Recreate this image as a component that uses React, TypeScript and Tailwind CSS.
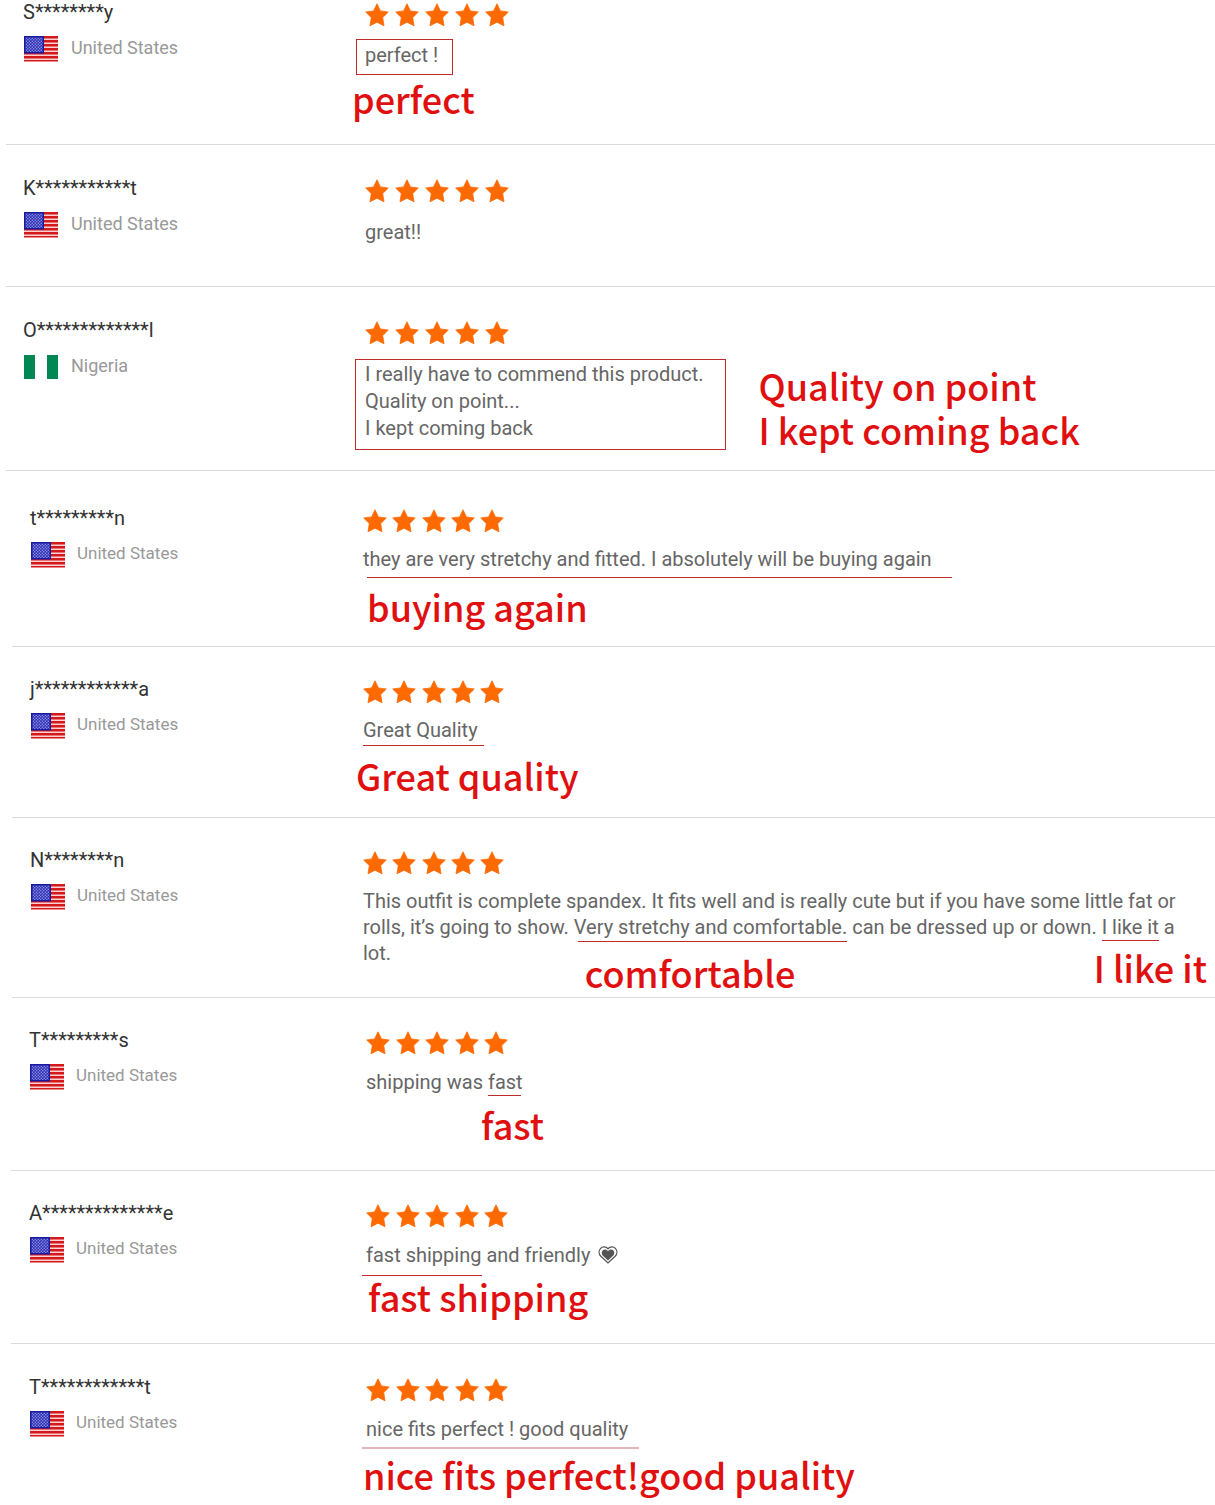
import { useId, type ReactNode } from "react";
import { clsx } from "clsx";

type Country = "United States" | "Nigeria";

interface Theme {
  inset: string;
  author: string;
  country: string;
  stars: string;
  comment: string;
}

const themes: Record<"wide" | "compact" | "regular", Theme> = {
  wide: {
    inset: "ml-[6px]",
    author: "pl-[18px] w-[359px]",
    country: "pl-px text-lg leading-6",
    stars: "w-36",
    comment: "leading-[27px]",
  },
  compact: {
    inset: "ml-3",
    author: "pl-[19px] w-[351px]",
    country: "text-[17px] leading-[22px]",
    stars: "w-[141px]",
    comment: "leading-[26px]",
  },
  regular: {
    inset: "ml-[11px]",
    author: "pl-[19px] w-[355px]",
    country: "text-[17px] leading-[22px]",
    stars: "w-[142px]",
    comment: "leading-[26px]",
  },
};

function UsFlag() {
  const id = useId();
  return (
    <svg viewBox="0 0 34 26" className="h-[26px] w-[34px] shrink-0" aria-hidden="true">
      <defs>
        <pattern id={id} width="3" height="3" patternUnits="userSpaceOnUse">
          <rect width="3" height="3" fill="#2f31b4" />
          <circle cx="0.8" cy="0.8" r="0.7" fill="#9aa0ea" />
          <circle cx="2.3" cy="2.3" r="0.7" fill="#9aa0ea" />
        </pattern>
      </defs>
      <rect width="34" height="26" fill="#fbd0d0" />
      {[0, 4, 8, 12, 16, 20, 24].map((y) => (
        <rect key={y} y={y} width="34" height={y === 24 ? 1.4 : 2.5} fill="#d3191c" />
      ))}
      <rect width="20" height="17.5" fill="#1a1aa0" />
      <rect x="1.5" y="1.5" width="17" height="14.5" fill={`url(#${id})`} />
    </svg>
  );
}

function NigeriaFlag() {
  return (
    <svg viewBox="0 0 34 26" className="h-[26px] w-[34px] shrink-0" aria-hidden="true">
      <rect y="1" width="11" height="24" fill="#008753" />
      <rect x="23" y="1" width="11" height="24" fill="#008753" />
    </svg>
  );
}

function Stars({ className }: { className: string }) {
  return (
    <div className={clsx("mt-[3px] flex justify-between", className)} role="img" aria-label="5 out of 5 stars">
      {[1, 2, 3, 4, 5].map((n) => (
        <svg key={n} viewBox="0 0 24 24" className="size-6 shrink-0" aria-hidden="true">
          <path
            d="M12 0.8 15.4 7.9 23.3 9 17.7 14.6 19 22.8 12 19.2 5 22.8 6.3 14.6 0.7 9 8.6 7.9Z"
            fill="#ff6a00"
            stroke="#ff6a00"
            strokeWidth="0.8"
            strokeLinejoin="round"
          />
        </svg>
      ))}
    </div>
  );
}

function HeartIcon() {
  return (
    <svg viewBox="0 0 22 20" className="ml-2 inline-block h-[18px] w-5 align-[-2px]" aria-hidden="true">
      <path
        d="M11 3C8.8 0.6 5 0.4 2.8 2.6C0.5 5 0.7 8.7 2.8 11.2L11 18.8L19.2 11.2C21.3 8.7 21.500 5 19.2 2.6C17 0.4 13.2 0.6 11 3Z"
        fill="none"
        stroke="#555"
        strokeWidth="1.4"
      />
      <path
        d="M11 5.8C9.6 3.6 6.6 3.4 5 5C3.5 6.7 3.7 9 5.1 10.6L11 16.2L16.9 10.6C18.3 9 18.5 6.7 17 5C15.4 3.4 12.4 3.6 11 5.8Z"
        fill="#555"
      />
    </svg>
  );
}

function Callout({ children, className }: { children: ReactNode; className?: string }) {
  return (
    <strong
      className={clsx(
        "block font-['Noto_Sans_CJK_SC',sans-serif] text-4xl leading-[44px] font-medium whitespace-nowrap text-[#e01010]",
        className,
      )}
    >
      {children}
    </strong>
  );
}

function Underline({ className }: { className: string }) {
  return <span className={clsx("block h-px bg-[#c22a2a]", className)} />;
}

interface ReviewProps {
  theme: Theme;
  name: string;
  country?: Country;
  className: string;
  children: ReactNode;
}

function Review({ theme, name, country = "United States", className, children }: ReviewProps) {
  return (
    <article className={clsx("flex border-[#dadada]", theme.inset, className)}>
      <div className={clsx("shrink-0", theme.author)}>
        <h3 className="-ml-px text-xl leading-6 text-[#333]">{name}</h3>
        <div className="mt-3 flex gap-3">
          {country === "Nigeria" ? <NigeriaFlag /> : <UsFlag />}
          <span className={clsx("text-[#999]", theme.country)}>{country}</span>
        </div>
      </div>
      <div className={clsx("min-w-0 flex-1 text-xl text-[#666]", theme.comment)}>
        <Stars className={theme.stars} />
        {children}
      </div>
    </article>
  );
}

export default function App() {
  const { wide, compact, regular } = themes;

  return (
    <main className="overflow-hidden bg-white font-[Roboto,sans-serif]">
      <section>
        <Review theme={wide} name="S********y" className="border-b pb-6">
          <p className="mt-3 -ml-[9px] w-fit border border-[#c22a2a] pt-[2px] pr-[14px] pb-[5px] pl-2">perfect !</p>
          <Callout className="mt-px -ml-[13px]">perfect</Callout>
        </Review>
        <Review theme={wide} name="K***********t" className="border-b pt-[31px] pb-10">
          <p className="mt-4">great!!</p>
        </Review>
        <Review theme={wide} name="O*************l" country="Nigeria" className="border-b pt-[31px] pb-5">
          <div className="mt-[14px] -ml-[10px] flex gap-[33px]">
            <p className="border border-[#c22a2a] pt-px pr-[21px] pb-[7px] pl-[9px] whitespace-nowrap">
              I really have to commend this product.
              <br />
              Quality on point...
              <br />I kept coming back
            </p>
            <Callout className="mt-1 -mb-2">
              Quality on point
              <br />I kept coming back
            </Callout>
          </div>
        </Review>
      </section>

      <section>
        <Review theme={compact} name="t*********n" className="border-b pt-[35px] pb-[18px]">
          <p className="mt-[13px]">they are very stretchy and fitted. I absolutely will be buying again</p>
          <Underline className="mt-[5px] ml-1 w-[585px]" />
          <Callout className="mt-[6px] ml-1">buying again</Callout>
        </Review>
        <Review theme={compact} name="j************a" className="border-b pt-[30px] pb-5">
          <p className="mt-[13px]">Great Quality</p>
          <Underline className="mt-[2px] w-[121px]" />
          <Callout className="mt-[7px] -ml-[7px]">Great quality</Callout>
        </Review>
        <Review theme={compact} name="N********n" className="border-b pt-[30px] pb-[31px]">
          <p className="mt-[13px] pr-8">
            This outfit is complete spandex. It fits well and is really cute but if you have some little fat or rolls,
            it’s going to show.{" "}
            <span className="relative">
              Very stretchy and comfortable.
              <Underline className="absolute right-0 -bottom-[3px] left-1" />
              <Callout className="absolute top-[35px] left-[11px]">comfortable</Callout>
            </span>{" "}
            can be dressed up or down.{" "}
            <span className="relative">
              I like it
              <Underline className="absolute right-0 -bottom-[2px] left-0" />
              <Callout className="absolute top-[30px] -left-2">I like it</Callout>
            </span>{" "}
            a lot.
          </p>
        </Review>
      </section>

      <section>
        <Review theme={regular} name="T*********s" className="border-b pt-[30px] pb-6">
          <p className="mt-[14px]">
            shipping was{" "}
            <span className="relative">
              fast
              <Underline className="absolute right-[2px] -bottom-[2px] left-0" />
            </span>
          </p>
          <Callout className="mt-[7px] ml-[115px]">fast</Callout>
        </Review>
        <Review theme={regular} name="A**************e" className="border-b pt-[30px] pb-[25px]">
          <p className="mt-[14px]">
            fast shipping and friendly
            <HeartIcon />
          </p>
          <Underline className="mt-[7px] -ml-1 w-[120px]" />
          <Callout className="-mt-[2px] ml-[2px]">fast shipping</Callout>
        </Review>
        <Review theme={regular} name="T************t" className="pt-[31px] pb-2">
          <p className="mt-[14px]">nice fits perfect ! good quality</p>
          <span className="mt-[5px] -ml-1 block h-[2px] w-[277px] bg-[#e5b5b5]" />
          <Callout className="mt-[3px] -ml-[3px]">nice fits perfect!good puality</Callout>
        </Review>
      </section>
    </main>
  );
}
